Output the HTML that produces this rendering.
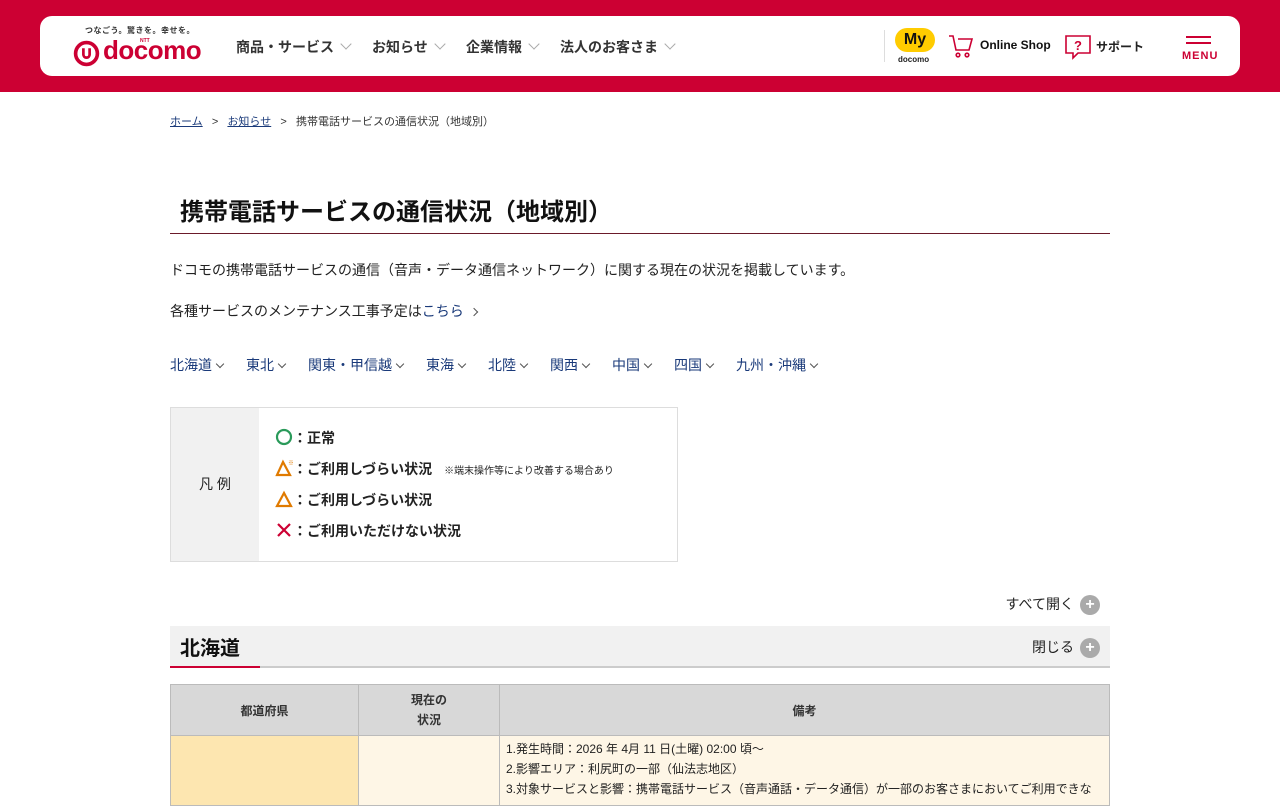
<!DOCTYPE html>
<html><head><meta charset="utf-8"><style>
*{margin:0;padding:0;box-sizing:border-box}
body{width:1280px;height:800px;overflow:hidden;background:#fff;font-family:"Liberation Sans","Noto Sans CJK JP",sans-serif;color:#222}
.top{background:#cc0033;height:92px;padding:16px 40px 0}
.bar{background:#fff;border-radius:12px;height:60px;position:relative}
.abs{position:absolute}
.nav{font-size:14px;font-weight:bold;color:#333;top:21px;white-space:nowrap}
.chev{display:inline-block;width:8px;height:8px;border-right:1.5px solid #aaa;border-bottom:1.5px solid #aaa;transform:rotate(45deg);margin-left:8px;position:relative;top:-4px}
.wrap{position:absolute;left:170px;width:940px}
a{color:#1a3a7a}
.rchev{display:inline-block;width:6px;height:6px;border-right:1.3px solid #555;border-bottom:1.3px solid #555;transform:rotate(45deg);margin-left:5px;position:relative;top:-3px}
.plus{display:inline-block;width:20px;height:20px;border-radius:50%;background:#aaa;color:#fff;text-align:center;line-height:20px;font-size:16px;font-weight:bold;vertical-align:middle;margin-left:6px}
table{border-collapse:collapse;width:940px;font-size:12px}
td,th{border:1px solid #bbb}
.lg svg{display:inline-block;vertical-align:-3px}
</style></head><body>
<div class="top"><div class="bar">
 <div class="abs" style="left:45px;top:9px;font-size:8px;font-weight:bold;color:#333;letter-spacing:.5px">つなごう。驚きを。幸せを。</div>
 <svg class="abs" style="left:33px;top:24px" width="27" height="27" viewBox="0 0 26 26"><circle cx="13" cy="13" r="10.5" fill="none" stroke="#cc0033" stroke-width="3.5"/><path d="M10 8v6a3 3 0 0 0 6 0v-6" fill="none" stroke="#cc0033" stroke-width="2.6"/></svg>
 <div class="abs" style="left:63px;top:19px;font-size:26px;font-weight:bold;color:#cc0033;letter-spacing:-0.5px">docomo</div>
 <div class="abs" style="left:100px;top:22px;font-size:5px;font-weight:bold;color:#cc0033">NTT</div>
 <div class="abs nav" style="left:196px">商品・サービス<span class="chev"></span></div>
 <div class="abs nav" style="left:332px">お知らせ<span class="chev"></span></div>
 <div class="abs nav" style="left:426px">企業情報<span class="chev"></span></div>
 <div class="abs nav" style="left:520px">法人のお客さま<span class="chev"></span></div>
 <div class="abs" style="left:844px;top:14px;width:1px;height:32px;background:#ddd"></div>
 <div class="abs" style="left:855px;top:12px;width:40px;height:24px;border-radius:12px;background:#ffcc00;font-weight:bold;font-size:16px;text-align:center;line-height:24px;color:#111">My</div>
 <div class="abs" style="left:858px;top:39px;font-size:8px;font-weight:bold">docomo</div>
 <svg class="abs" style="left:908px;top:18px" width="26" height="26" viewBox="0 0 26 26" fill="none" stroke="#cc0033" stroke-width="1.6"><path d="M1 2h4l3 14h13l3-11H10"/><circle cx="10" cy="21" r="1.8"/><circle cx="19" cy="21" r="1.8"/></svg>
 <div class="abs" style="left:940px;top:22px;font-size:12px;font-weight:bold;color:#111">Online Shop</div>
 <svg class="abs" style="left:1024px;top:18px" width="28" height="26" viewBox="0 0 28 26" fill="none" stroke="#cc0033" stroke-width="1.6"><path d="M2 2h24v17H14l-5 5v-5H2z"/><text x="14" y="16" font-size="13" font-weight="bold" fill="#cc0033" stroke="none" text-anchor="middle" font-family="Liberation Sans">?</text></svg>
 <div class="abs" style="left:1056px;top:22px;font-size:12px;font-weight:bold;color:#222">サポート</div>
 <div class="abs" style="left:1146px;top:20px;width:25px;height:1.5px;background:#cc0033"></div>
 <div class="abs" style="left:1146px;top:26px;width:25px;height:1.5px;background:#cc0033"></div>
 <div class="abs" style="left:1142px;top:34px;font-size:11px;font-weight:bold;color:#cc0033;letter-spacing:1px">MENU</div>
</div></div>

<div class="wrap" style="top:113px;font-size:11px;color:#333"><a href="#">ホーム</a>&nbsp;&nbsp;&nbsp;&gt;&nbsp;&nbsp;&nbsp;<a href="#">お知らせ</a>&nbsp;&nbsp;&nbsp;&gt;&nbsp;&nbsp;&nbsp;携帯電話サービスの通信状況（地域別）</div>
<div class="wrap" style="top:192px;padding-left:10px;font-size:24px;font-weight:bold;color:#111">携帯電話サービスの通信状況（地域別）</div>
<div class="wrap" style="top:233px;height:1px;background:#6b1a2a"></div>
<div class="wrap" style="top:260px;font-size:14px">ドコモの携帯電話サービスの通信（音声・データ通信ネットワーク）に関する現在の状況を掲載しています。</div>
<div class="wrap" style="top:301px;font-size:14px">各種サービスのメンテナンス工事予定は<span style="color:#1a3a7a">こちら</span><span class="rchev" style="transform:rotate(-45deg);top:-1px;margin-left:7px"></span></div>
<div class="wrap" style="top:355px;font-size:14px;color:#1a3a7a">
<span class="abs" style="left:0">北海道<span class="rchev"></span></span><span class="abs" style="left:76px">東北<span class="rchev"></span></span><span class="abs" style="left:138px">関東・甲信越<span class="rchev"></span></span><span class="abs" style="left:256px">東海<span class="rchev"></span></span><span class="abs" style="left:318px">北陸<span class="rchev"></span></span><span class="abs" style="left:380px">関西<span class="rchev"></span></span><span class="abs" style="left:442px">中国<span class="rchev"></span></span><span class="abs" style="left:504px">四国<span class="rchev"></span></span><span class="abs" style="left:566px">九州・沖縄<span class="rchev"></span></span></div>

<div class="abs" style="left:170px;top:407px;width:508px;height:155px;border:1px solid #ddd;display:flex">
 <div style="width:88px;background:#f1f1f1;text-align:center;line-height:153px;font-size:14px">凡 例</div>
 <div class="lg" style="padding:15px 0 0 16px;font-size:14px;font-weight:bold;line-height:31px">
  <div style="height:31px"><svg width="18" height="18"><circle cx="9" cy="9" r="7" fill="none" stroke="#2a9a5a" stroke-width="2.2"/></svg>：正常</div>
  <div style="height:31px"><svg width="18" height="18"><path d="M8 3L2 16h13z" fill="none" stroke="#e07a00" stroke-width="2.2"/><text x="13" y="6" font-size="6" fill="#e07a00">※</text></svg>：ご利用しづらい状況 <span style="font-size:10px;font-weight:normal;margin-left:8px">※端末操作等により改善する場合あり</span></div>
  <div style="height:31px"><svg width="18" height="18"><path d="M9 3L2 16h14z" fill="none" stroke="#e07a00" stroke-width="2.2"/></svg>：ご利用しづらい状況</div>
  <div style="height:31px"><svg width="18" height="18"><path d="M3 3l12 12M15 3L3 15" stroke="#cc0033" stroke-width="2.2"/></svg>：ご利用いただけない状況</div>
 </div>
</div>

<div class="wrap" style="top:594px;text-align:right;font-size:14px;padding-right:10px">すべて開く<span class="plus">+</span></div>
<div class="wrap" style="top:626px;height:42px;background:#f1f1f1;border-bottom:2px solid #ccc">
 <div style="position:absolute;left:10px;top:6px;font-size:20px;font-weight:bold;color:#111">北海道</div>
 <div style="position:absolute;left:0;bottom:-2px;width:90px;height:2px;background:#cc0033"></div>
 <div style="position:absolute;right:10px;top:11px;font-size:14px">閉じる<span class="plus">+</span></div>
</div>
<div class="wrap" style="top:684px">
<table>
<tr style="background:#d8d8d8;height:51px;font-weight:bold;color:#333"><td style="width:188px;text-align:center">都道府県</td><td style="width:141px;text-align:center;line-height:20px">現在の<br>状況</td><td style="text-align:center">備考</td></tr>
<tr style="height:70px"><td style="background:#fde6b0"></td><td style="background:#fef6e6"></td><td style="background:#fef6e6;padding:3px 6px;line-height:20px;vertical-align:top">1.発生時間：2026 年 4月 11 日(土曜) 02:00 頃～<br>2.影響エリア：利尻町の一部（仙法志地区）<br>3.対象サービスと影響：携帯電話サービス（音声通話・データ通信）が一部のお客さまにおいてご利用できな</td></tr>
</table></div>
</body></html>
